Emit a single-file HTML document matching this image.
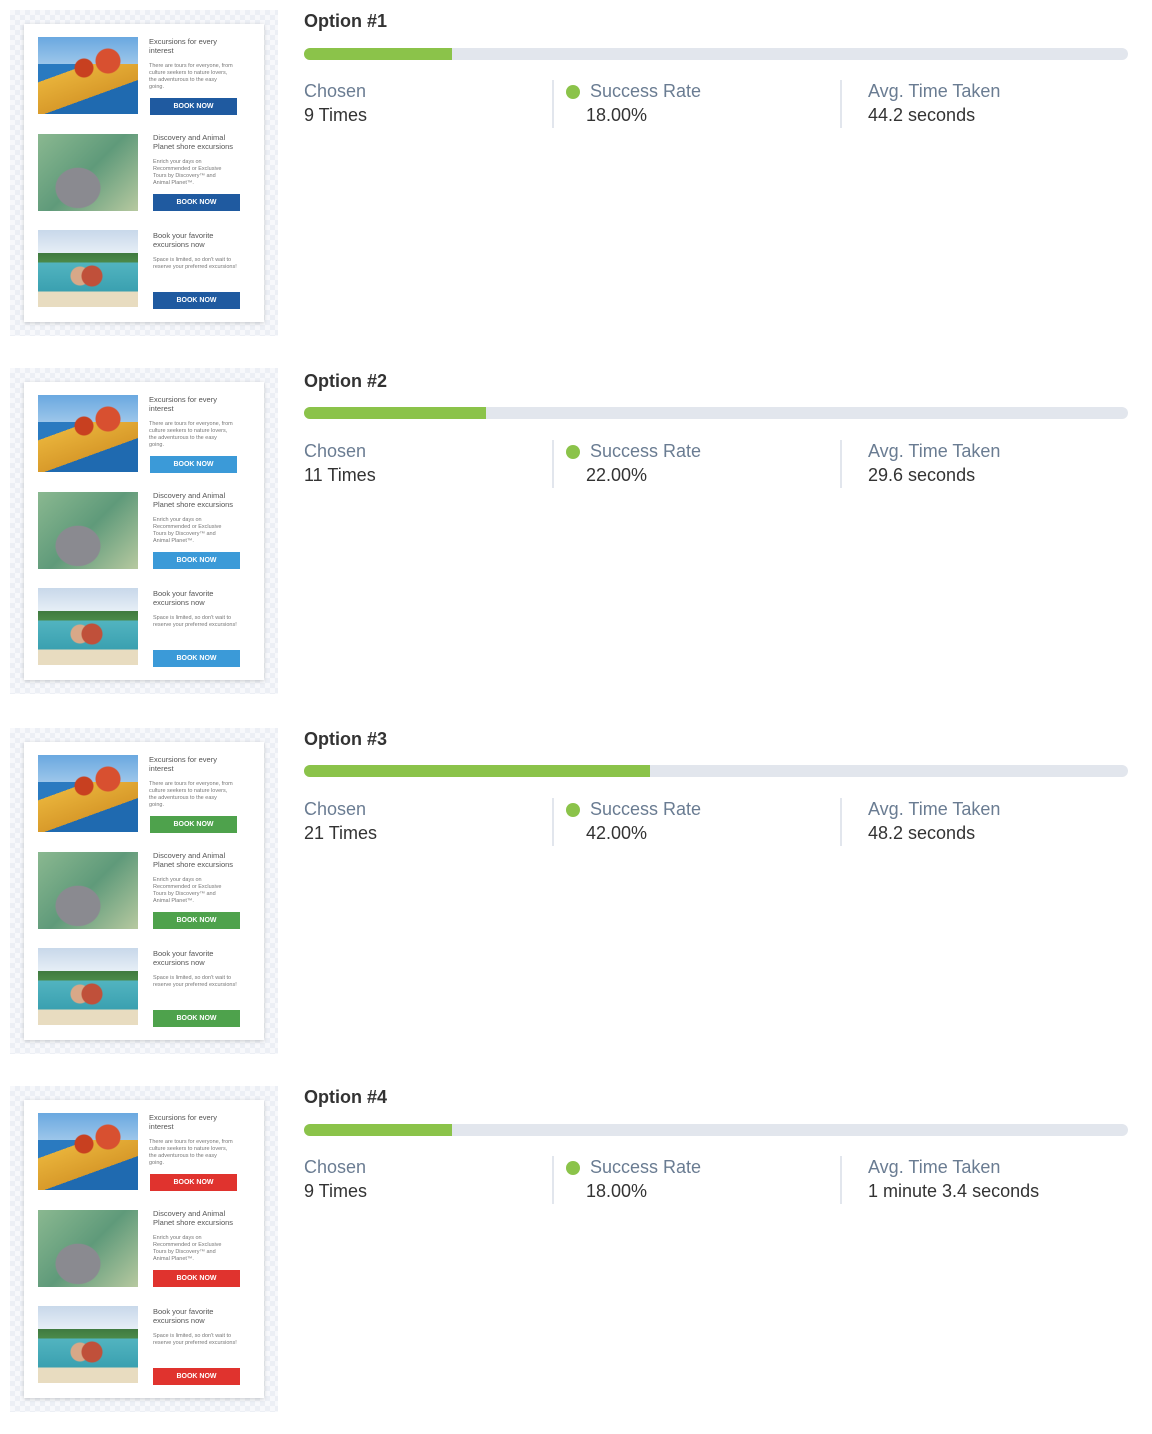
<!DOCTYPE html>
<html><head><meta charset="utf-8"><style>
*{margin:0;padding:0;box-sizing:border-box}
body{width:1152px;height:1408px;overflow:hidden;background:#fff;font-family:"Liberation Sans",sans-serif;position:relative}
.blk{position:absolute;left:0;width:1152px;height:358px}
.thumb{position:absolute;left:10px;top:10px;width:268px;height:326px;background-color:#f7f8fb;background-image:linear-gradient(45deg,#eceff5 25%,transparent 25%,transparent 75%,#eceff5 75%),linear-gradient(45deg,#eceff5 25%,transparent 25%,transparent 75%,#eceff5 75%);background-size:10px 10px;background-position:0 0,5px 5px}
.card{position:absolute;left:24px;top:24px;width:240px;height:298px;background:#fff;box-shadow:0 1px 4px rgba(0,0,0,.18)}
.img{position:absolute;left:14px;width:100px;height:77px}
.i1{top:13px;background:linear-gradient(180deg,#6aa8e0 0%,#9cc6ea 35%,transparent 35%),linear-gradient(160deg,transparent 40%,#e8b23a 40%,#d89a2a 70%,#1f6ab0 70%);background-color:#2a7ac0}
.i1:after{content:"";position:absolute;left:28px;top:10px;width:60px;height:35px;background:radial-gradient(circle at 70% 40%,#d85030 0 12px,transparent 13px),radial-gradient(circle at 30% 60%,#c84020 0 9px,transparent 10px)}
.i2{top:110px;background:radial-gradient(ellipse at 40% 70%,#8a8a90 0 22px,transparent 23px),linear-gradient(135deg,#8ab890,#5f9a7a 50%,#b7c9a0)}
.i3{top:206px;background:linear-gradient(180deg,#c8d8ea 0%,#e6eef6 30%,#3f7a3f 30%,#4b8a4a 42%,#52b4c0 42%,#3aa0b0 80%,#e8dcc0 80%)}
.i3:after{content:"";position:absolute;left:30px;top:28px;width:40px;height:45px;background:radial-gradient(circle at 60% 40%,#c0503a 0 10px,transparent 11px),radial-gradient(circle at 30% 40%,#d8a888 0 9px,transparent 10px)}
.h{position:absolute;font-size:7.5px;color:#555;line-height:8.5px;width:86px}
.p{position:absolute;font-size:5.5px;color:#777;line-height:7px;width:84px}
.b{position:absolute;width:87px;height:17px;color:#fff;font-size:7px;font-weight:bold;text-align:center;line-height:17px}
.t{position:absolute;left:304px;top:11px;font-size:18px;font-weight:bold;color:#333}
.bar{position:absolute;left:304px;top:48px;width:824px;height:12px;border-radius:6px;background:#e2e6ed;overflow:hidden}
.bar i{display:block;height:100%;background:#8bc34a}
.lab{position:absolute;top:81px;font-size:18px;color:#6a7c92}
.val{position:absolute;top:105px;font-size:18px;color:#333}
.div{position:absolute;top:80px;width:2px;height:48px;background:#e2e6ed}
.dot{position:absolute;left:566px;top:85px;width:14px;height:14px;border-radius:50%;background:#8bc34a}
</style></head><body>

<div class="blk" style="top:0">
<div class="thumb"></div><div class="card">
<div class="img i1"></div><div class="h" style="left:125px;top:14px;width:76px">Excursions for every interest</div><div class="p" style="left:125px;top:39px">There are tours for everyone, from culture seekers to nature lovers, the adventurous to the easy going.</div><div class="b" style="left:126px;top:74px;background:#1f5aa0">BOOK NOW</div>
<div class="img i2"></div><div class="h" style="left:129px;top:110px">Discovery and Animal Planet shore excursions</div><div class="p" style="left:129px;top:135px;width:80px">Enrich your days on Recommended or Exclusive Tours by Discovery™ and Animal Planet™.</div><div class="b" style="left:129px;top:170px;background:#1f5aa0">BOOK NOW</div>
<div class="img i3"></div><div class="h" style="left:129px;top:208px;width:70px">Book your favorite excursions now</div><div class="p" style="left:129px;top:233px">Space is limited, so don't wait to reserve your preferred excursions!</div><div class="b" style="left:129px;top:268px;background:#1f5aa0">BOOK NOW</div>
</div>
<div class="t">Option #1</div><div class="bar"><i style="width:148px"></i></div>
<div class="lab" style="left:304px">Chosen</div><div class="val" style="left:304px">9 Times</div>
<div class="div" style="left:552px"></div><div class="dot"></div>
<div class="lab" style="left:590px">Success Rate</div><div class="val" style="left:586px">18.00%</div>
<div class="div" style="left:840px"></div>
<div class="lab" style="left:868px">Avg. Time Taken</div><div class="val" style="left:868px">44.2 seconds</div>
</div>

<div class="blk" style="top:358px">
<div class="thumb"></div><div class="card">
<div class="img i1"></div><div class="h" style="left:125px;top:14px;width:76px">Excursions for every interest</div><div class="p" style="left:125px;top:39px">There are tours for everyone, from culture seekers to nature lovers, the adventurous to the easy going.</div><div class="b" style="left:126px;top:74px;background:#3b9ad8">BOOK NOW</div>
<div class="img i2"></div><div class="h" style="left:129px;top:110px">Discovery and Animal Planet shore excursions</div><div class="p" style="left:129px;top:135px;width:80px">Enrich your days on Recommended or Exclusive Tours by Discovery™ and Animal Planet™.</div><div class="b" style="left:129px;top:170px;background:#3b9ad8">BOOK NOW</div>
<div class="img i3"></div><div class="h" style="left:129px;top:208px;width:70px">Book your favorite excursions now</div><div class="p" style="left:129px;top:233px">Space is limited, so don't wait to reserve your preferred excursions!</div><div class="b" style="left:129px;top:268px;background:#3b9ad8">BOOK NOW</div>
</div>
<div class="t" style="top:13px">Option #2</div><div class="bar" style="top:49px"><i style="width:182px"></i></div>
<div class="lab" style="left:304px;top:83px">Chosen</div><div class="val" style="left:304px;top:107px">11 Times</div>
<div class="div" style="left:552px;top:82px"></div><div class="dot" style="top:87px"></div>
<div class="lab" style="left:590px;top:83px">Success Rate</div><div class="val" style="left:586px;top:107px">22.00%</div>
<div class="div" style="left:840px;top:82px"></div>
<div class="lab" style="left:868px;top:83px">Avg. Time Taken</div><div class="val" style="left:868px;top:107px">29.6 seconds</div>
</div>

<div class="blk" style="top:718px">
<div class="thumb"></div><div class="card">
<div class="img i1"></div><div class="h" style="left:125px;top:14px;width:76px">Excursions for every interest</div><div class="p" style="left:125px;top:39px">There are tours for everyone, from culture seekers to nature lovers, the adventurous to the easy going.</div><div class="b" style="left:126px;top:74px;background:#4ea24c">BOOK NOW</div>
<div class="img i2"></div><div class="h" style="left:129px;top:110px">Discovery and Animal Planet shore excursions</div><div class="p" style="left:129px;top:135px;width:80px">Enrich your days on Recommended or Exclusive Tours by Discovery™ and Animal Planet™.</div><div class="b" style="left:129px;top:170px;background:#4ea24c">BOOK NOW</div>
<div class="img i3"></div><div class="h" style="left:129px;top:208px;width:70px">Book your favorite excursions now</div><div class="p" style="left:129px;top:233px">Space is limited, so don't wait to reserve your preferred excursions!</div><div class="b" style="left:129px;top:268px;background:#4ea24c">BOOK NOW</div>
</div>
<div class="t">Option #3</div><div class="bar" style="top:47px"><i style="width:346px"></i></div>
<div class="lab" style="left:304px">Chosen</div><div class="val" style="left:304px">21 Times</div>
<div class="div" style="left:552px"></div><div class="dot"></div>
<div class="lab" style="left:590px">Success Rate</div><div class="val" style="left:586px">42.00%</div>
<div class="div" style="left:840px"></div>
<div class="lab" style="left:868px">Avg. Time Taken</div><div class="val" style="left:868px">48.2 seconds</div>
</div>

<div class="blk" style="top:1076px">
<div class="thumb"></div><div class="card">
<div class="img i1"></div><div class="h" style="left:125px;top:14px;width:76px">Excursions for every interest</div><div class="p" style="left:125px;top:39px">There are tours for everyone, from culture seekers to nature lovers, the adventurous to the easy going.</div><div class="b" style="left:126px;top:74px;background:#e0332e">BOOK NOW</div>
<div class="img i2"></div><div class="h" style="left:129px;top:110px">Discovery and Animal Planet shore excursions</div><div class="p" style="left:129px;top:135px;width:80px">Enrich your days on Recommended or Exclusive Tours by Discovery™ and Animal Planet™.</div><div class="b" style="left:129px;top:170px;background:#e0332e">BOOK NOW</div>
<div class="img i3"></div><div class="h" style="left:129px;top:208px;width:70px">Book your favorite excursions now</div><div class="p" style="left:129px;top:233px">Space is limited, so don't wait to reserve your preferred excursions!</div><div class="b" style="left:129px;top:268px;background:#e0332e">BOOK NOW</div>
</div>
<div class="t">Option #4</div><div class="bar" style="top:48px"><i style="width:148px"></i></div>
<div class="lab" style="left:304px">Chosen</div><div class="val" style="left:304px">9 Times</div>
<div class="div" style="left:552px"></div><div class="dot"></div>
<div class="lab" style="left:590px">Success Rate</div><div class="val" style="left:586px">18.00%</div>
<div class="div" style="left:840px"></div>
<div class="lab" style="left:868px">Avg. Time Taken</div><div class="val" style="left:868px">1 minute 3.4 seconds</div>
</div>

</body></html>
